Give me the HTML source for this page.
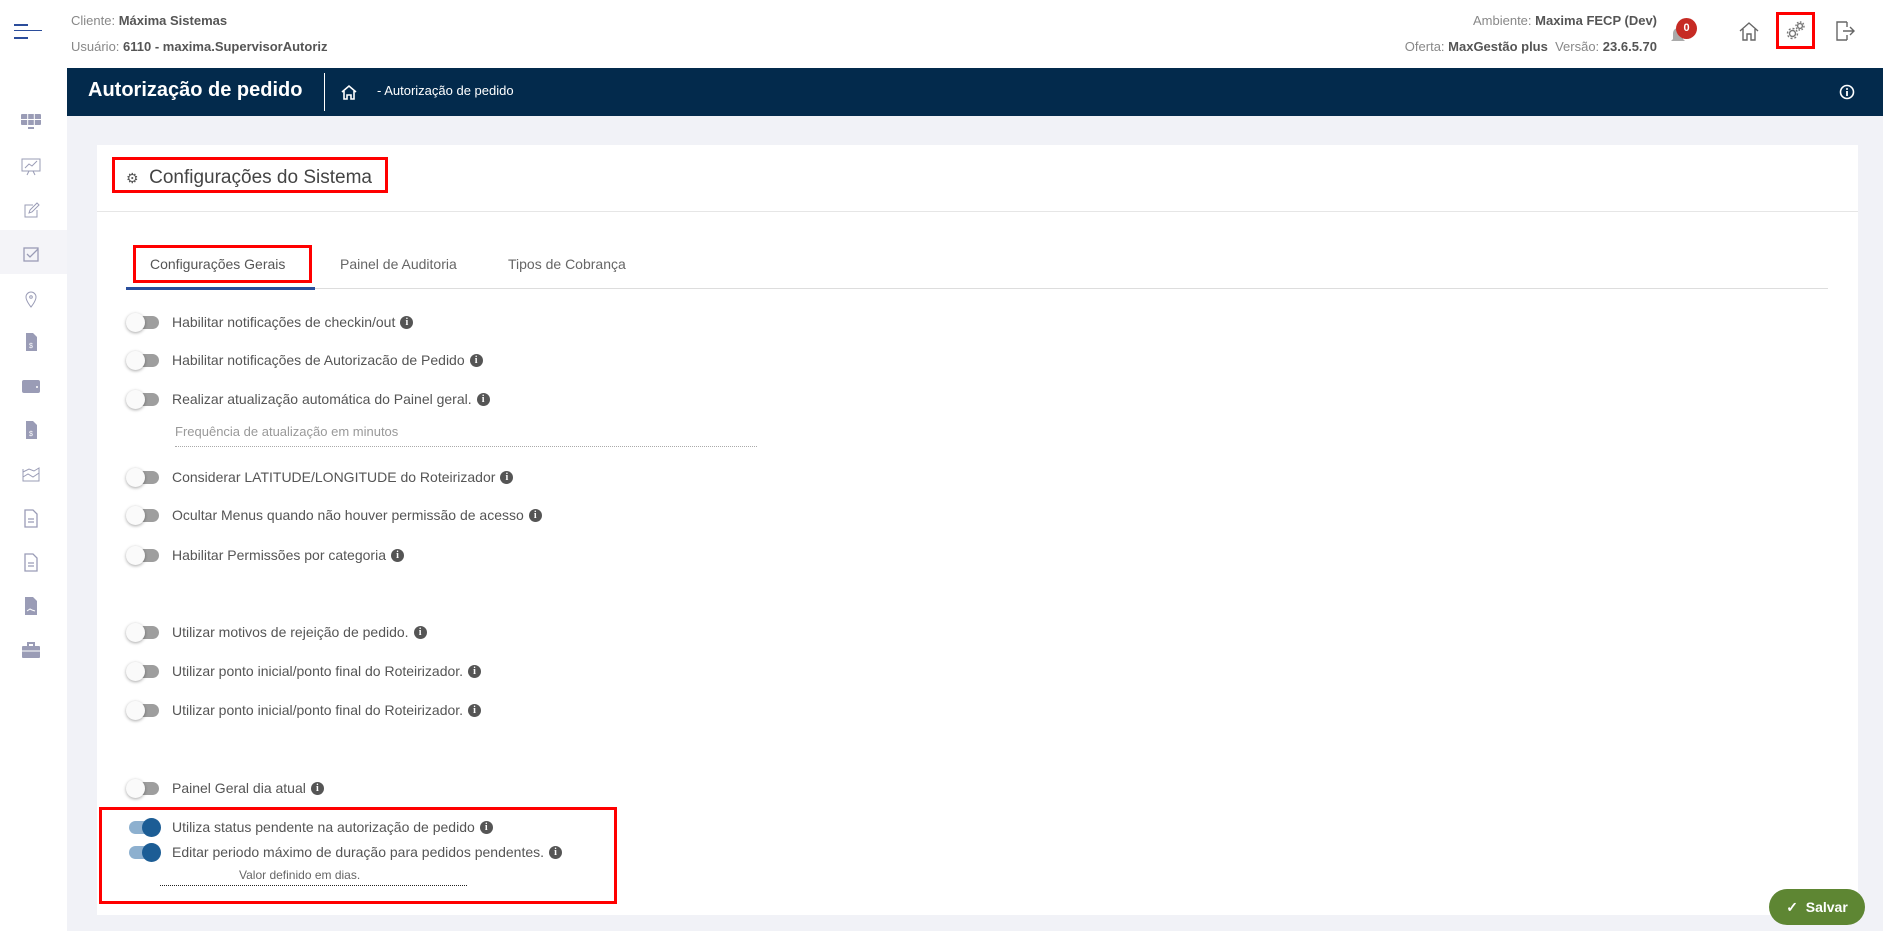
<!DOCTYPE html>
<html><head><meta charset="utf-8"><style>
*{box-sizing:border-box;margin:0;padding:0}
body{width:1883px;height:931px;overflow:hidden;background:#f1f2f7;font-family:"Liberation Sans",sans-serif;position:relative;color:#555}
.a{position:absolute}
.hdr{left:0;top:0;width:1883px;height:68px;background:#fff}
.side{left:0;top:68px;width:67px;height:863px;background:#fff}
.bar{left:67px;top:68px;width:1816px;height:48px;background:#032a4c}
.card{left:97px;top:145px;width:1761px;height:770px;background:#fff}
.lbl{font-size:13px;color:#888}
.lbl b{color:#555;font-weight:bold}
.row{position:absolute;left:126px;height:20px;display:flex;align-items:center;font-size:14px;color:#555}
.tg{position:relative;width:35px;height:20px;margin-right:11px}
.tg .t{position:absolute;left:3px;top:4px;width:30px;height:13px;border-radius:7px;background:#9e9e9e}
.tg .k{position:absolute;left:0;top:1px;width:19px;height:19px;border-radius:50%;background:#fafafa;box-shadow:0 1px 3px rgba(0,0,0,.35)}
.on .t{background:#8db0cf}
.on .k{left:16px;background:#1c5d95;box-shadow:none}
.i{display:inline-block;width:13px;height:13px;border-radius:50%;background:#555;color:#fff;font-size:10px;font-weight:bold;text-align:center;line-height:13px;margin-left:5px;font-family:"Liberation Serif",serif}
.red{position:absolute;border:3px solid #f00}
.si{position:absolute;left:19px;width:24px;height:20px}
</style></head><body>
<div class="a hdr">
 <div class="a" style="left:14px;top:24px;width:14px;height:2px;background:#2b4d9b"></div>
 <div class="a" style="left:14px;top:30px;width:28px;height:1px;background:#2b4d9b"></div>
 <div class="a" style="left:14px;top:37px;width:14px;height:2px;background:#2b4d9b"></div>
 <div class="a lbl" style="left:71px;top:13px">Cliente: <b>Máxima Sistemas</b></div>
 <div class="a lbl" style="left:71px;top:39px">Usuário: <b>6110 - maxima.SupervisorAutoriz</b></div>
 <div class="a lbl" style="right:226px;top:13px">Ambiente: <b>Maxima FECP (Dev)</b></div>
 <div class="a lbl" style="right:226px;top:39px">Oferta: <b>MaxGestão plus</b> &nbsp;Versão: <b>23.6.5.70</b></div>
 <svg class="a" style="left:1670px;top:24px" width="16" height="22"><path d="M3 15V9a5 5 0 0 1 10 0v6l2 2H1z" fill="#aaa"/></svg>
 <div class="a" style="left:1676px;top:18px;width:21px;height:21px;border-radius:50%;background:#c62b24;color:#fff;font-size:11px;font-weight:bold;text-align:center;line-height:21px">0</div>
 <svg class="a" style="left:1738px;top:20px" width="22" height="22" fill="none" stroke="#666" stroke-width="1.4"><path d="M2 11L11 3l9 8M5 9v11h4v-6h4v6h4V9"/></svg>
 <div class="red" style="left:1776px;top:12px;width:39px;height:37px;border-width:3px"></div>
 <svg class="a" style="left:1784px;top:18px" width="24" height="24" fill="none" stroke="#777" stroke-width="1.4"><circle cx="8.5" cy="15.5" r="3" /><circle cx="8.5" cy="15.5" r="5" stroke-dasharray="2 1.9"/><circle cx="16" cy="8" r="2.4"/><circle cx="16" cy="8" r="4" stroke-dasharray="1.6 1.5"/></svg>
 <svg class="a" style="left:1834px;top:20px" width="22" height="22" fill="none" stroke="#666" stroke-width="1.4"><path d="M13 2H3v18h10M13 2v5M13 15v5M9 11h11M16 7l4 4-4 4"/></svg>
</div>
<div class="a side">
 <div class="a" style="left:0;top:162px;width:67px;height:44px;background:#f4f4f8"></div>
 <svg class="si" style="top:44px" viewBox="0 0 24 20"><rect x="2" y="2" width="20" height="11" rx="1" fill="#9a9cb6"/><path d="M2 7.5h20M8.7 2v11M15.3 2v11" stroke="#fff"/><rect x="9" y="15" width="6" height="2" fill="#9a9cb6"/></svg>
 <svg class="si" style="top:88px" viewBox="0 0 24 20" fill="none" stroke="#9a9cb6"><rect x="3" y="3" width="18" height="12"/><path d="M6 12l4-4 3 2 5-5M8 19l2-4M16 19l-2-4"/></svg>
 <svg class="si" style="top:132px" viewBox="0 0 24 20" fill="none" stroke="#9a9cb6"><path d="M14 5H6v12h12v-7"/><path d="M10 13l1-3 7-7 2 2-7 7z"/></svg>
 <svg class="si" style="top:176px" viewBox="0 0 24 20" fill="none" stroke="#9a9cb6" stroke-width="1.3"><rect x="5" y="4" width="14" height="13"/><path d="M8 10l3 3 8-8"/></svg>
 <svg class="si" style="top:221px" viewBox="0 0 24 20" fill="none" stroke="#9a9cb6"><path d="M12 18s-5-6-5-10a5 5 0 0 1 10 0c0 4-5 10-5 10z"/><circle cx="12" cy="8" r="1.3"/></svg>
 <svg class="si" style="top:264px" viewBox="0 0 24 20"><path d="M7 1h7l4 4v14H7z" fill="#9a9cb6"/><text x="10" y="16" font-size="7" fill="#fff" font-family="Liberation Sans">$</text></svg>
 <svg class="si" style="top:308px" viewBox="0 0 24 20"><rect x="3" y="4" width="18" height="13" rx="2" fill="#9a9cb6"/><circle cx="18" cy="11" r="1" fill="#fff"/></svg>
 <svg class="si" style="top:352px" viewBox="0 0 24 20"><path d="M7 1h7l4 4v14H7z" fill="#9a9cb6"/><text x="10" y="16" font-size="7" fill="#fff" font-family="Liberation Sans">$</text></svg>
 <svg class="si" style="top:396px" viewBox="0 0 24 20" fill="none" stroke="#9a9cb6"><path d="M4 5v12h16V4l-5 3-5-2-6 3M4 13l5-3 5 3 6-4"/></svg>
 <svg class="si" style="top:440px" viewBox="0 0 24 20" fill="none" stroke="#9a9cb6" stroke-width="1.3"><path d="M6 2h8l4 4v13H6z"/><path d="M9 11h6M9 14h6"/></svg>
 <svg class="si" style="top:484px" viewBox="0 0 24 20" fill="none" stroke="#9a9cb6" stroke-width="1.3"><path d="M6 2h8l4 4v13H6z"/><path d="M9 11h6M9 14h6"/></svg>
 <svg class="si" style="top:528px" viewBox="0 0 24 20"><path d="M6 1h8l4 4v14H6z" fill="#9a9cb6"/><path d="M8 15l3-2 2 1 3 1" stroke="#fff" fill="none"/></svg>
 <svg class="si" style="top:572px" viewBox="0 0 24 20"><rect x="3" y="6" width="18" height="12" rx="1" fill="#9a9cb6"/><path d="M9 6V3h6v3" stroke="#9a9cb6" stroke-width="2" fill="none"/><path d="M3 11h18" stroke="#fff"/></svg>
</div>
<div class="a bar">
 <div class="a" style="left:21px;top:11px;color:#fff;font-size:20px;font-weight:bold">Autorização de pedido</div>
 <div class="a" style="left:257px;top:5px;width:1px;height:38px;background:#fff"></div>
 <svg class="a" style="left:274px;top:16px" width="16" height="16" fill="none" stroke="#fff" stroke-width="1.6"><path d="M1 8l7-6 7 6M3 7v8h3v-4h4v4h3V7"/></svg>
 <div class="a" style="left:310px;top:15px;color:#fff;font-size:13px">- Autorização de pedido</div>
 <svg class="a" style="left:1772px;top:16px" width="16" height="16"><circle cx="8" cy="8" r="6.5" fill="none" stroke="#fff" stroke-width="1.6"/><circle cx="8" cy="5" r="1" fill="#fff"/><path d="M8 7v5" stroke="#fff" stroke-width="1.8"/></svg>
</div>
<div class="a card">
 <div class="a" style="left:0;top:66px;width:1761px;height:1px;background:#e6e6e6"></div>
 <div class="a" style="left:29px;top:22px;font-size:19px;color:#444"><span style="font-size:14px;color:#555">⚙</span>&nbsp; Configurações do Sistema</div>
 <div class="a" style="left:29px;top:143px;width:1702px;height:1px;background:#ddd"></div>
 <div class="a" style="left:29px;top:142px;width:189px;height:3px;background:#2a4f9c"></div>
 <div class="a" style="left:53px;top:111px;font-size:14px;color:#555">Configurações Gerais</div>
 <div class="a" style="left:243px;top:111px;font-size:14px;color:#666">Painel de Auditoria</div>
 <div class="a" style="left:411px;top:111px;font-size:14px;color:#666">Tipos de Cobrança</div>
</div>
<div class="red" style="left:112px;top:157px;width:276px;height:36px"></div>
<div class="red" style="left:133px;top:245px;width:179px;height:38px"></div>

<div class="row" style="top:312px"><div class="tg"><div class="t"></div><div class="k"></div></div>Habilitar notificações de checkin/out<span class="i">i</span></div>
<div class="row" style="top:350px"><div class="tg"><div class="t"></div><div class="k"></div></div>Habilitar notificações de Autorizacão de Pedido<span class="i">i</span></div>
<div class="row" style="top:389px"><div class="tg"><div class="t"></div><div class="k"></div></div>Realizar atualização automática do Painel geral.<span class="i">i</span></div>
<div class="a" style="left:175px;top:424px;font-size:13px;color:#999">Frequência de atualização em minutos</div>
<div class="a" style="left:175px;top:446px;width:582px;border-top:1px dotted #aaa"></div>
<div class="row" style="top:467px"><div class="tg"><div class="t"></div><div class="k"></div></div>Considerar LATITUDE/LONGITUDE do Roteirizador<span class="i">i</span></div>
<div class="row" style="top:505px"><div class="tg"><div class="t"></div><div class="k"></div></div>Ocultar Menus quando não houver permissão de acesso<span class="i">i</span></div>
<div class="row" style="top:545px"><div class="tg"><div class="t"></div><div class="k"></div></div>Habilitar Permissões por categoria<span class="i">i</span></div>
<div class="row" style="top:622px"><div class="tg"><div class="t"></div><div class="k"></div></div>Utilizar motivos de rejeição de pedido.<span class="i">i</span></div>
<div class="row" style="top:661px"><div class="tg"><div class="t"></div><div class="k"></div></div>Utilizar ponto inicial/ponto final do Roteirizador.<span class="i">i</span></div>
<div class="row" style="top:700px"><div class="tg"><div class="t"></div><div class="k"></div></div>Utilizar ponto inicial/ponto final do Roteirizador.<span class="i">i</span></div>
<div class="row" style="top:778px"><div class="tg"><div class="t"></div><div class="k"></div></div>Painel Geral dia atual<span class="i">i</span></div>
<div class="row" style="top:817px"><div class="tg on"><div class="t"></div><div class="k"></div></div>Utiliza status pendente na autorização de pedido<span class="i">i</span></div>
<div class="row" style="top:842px"><div class="tg on"><div class="t"></div><div class="k"></div></div>Editar periodo máximo de duração para pedidos pendentes.<span class="i">i</span></div>
<div class="a" style="left:239px;top:868px;font-size:12px;color:#666">Valor definido em dias.</div>
<div class="a" style="left:160px;top:885px;width:307px;border-top:1px dotted #222"></div>
<div class="red" style="left:99px;top:807px;width:518px;height:97px"></div>

<div class="a" style="left:1769px;top:889px;width:96px;height:36px;border-radius:18px;background:#5e8633;color:#fff;font-size:14px;font-weight:bold;line-height:36px;text-align:center">✓&nbsp; Salvar</div>
</body></html>
